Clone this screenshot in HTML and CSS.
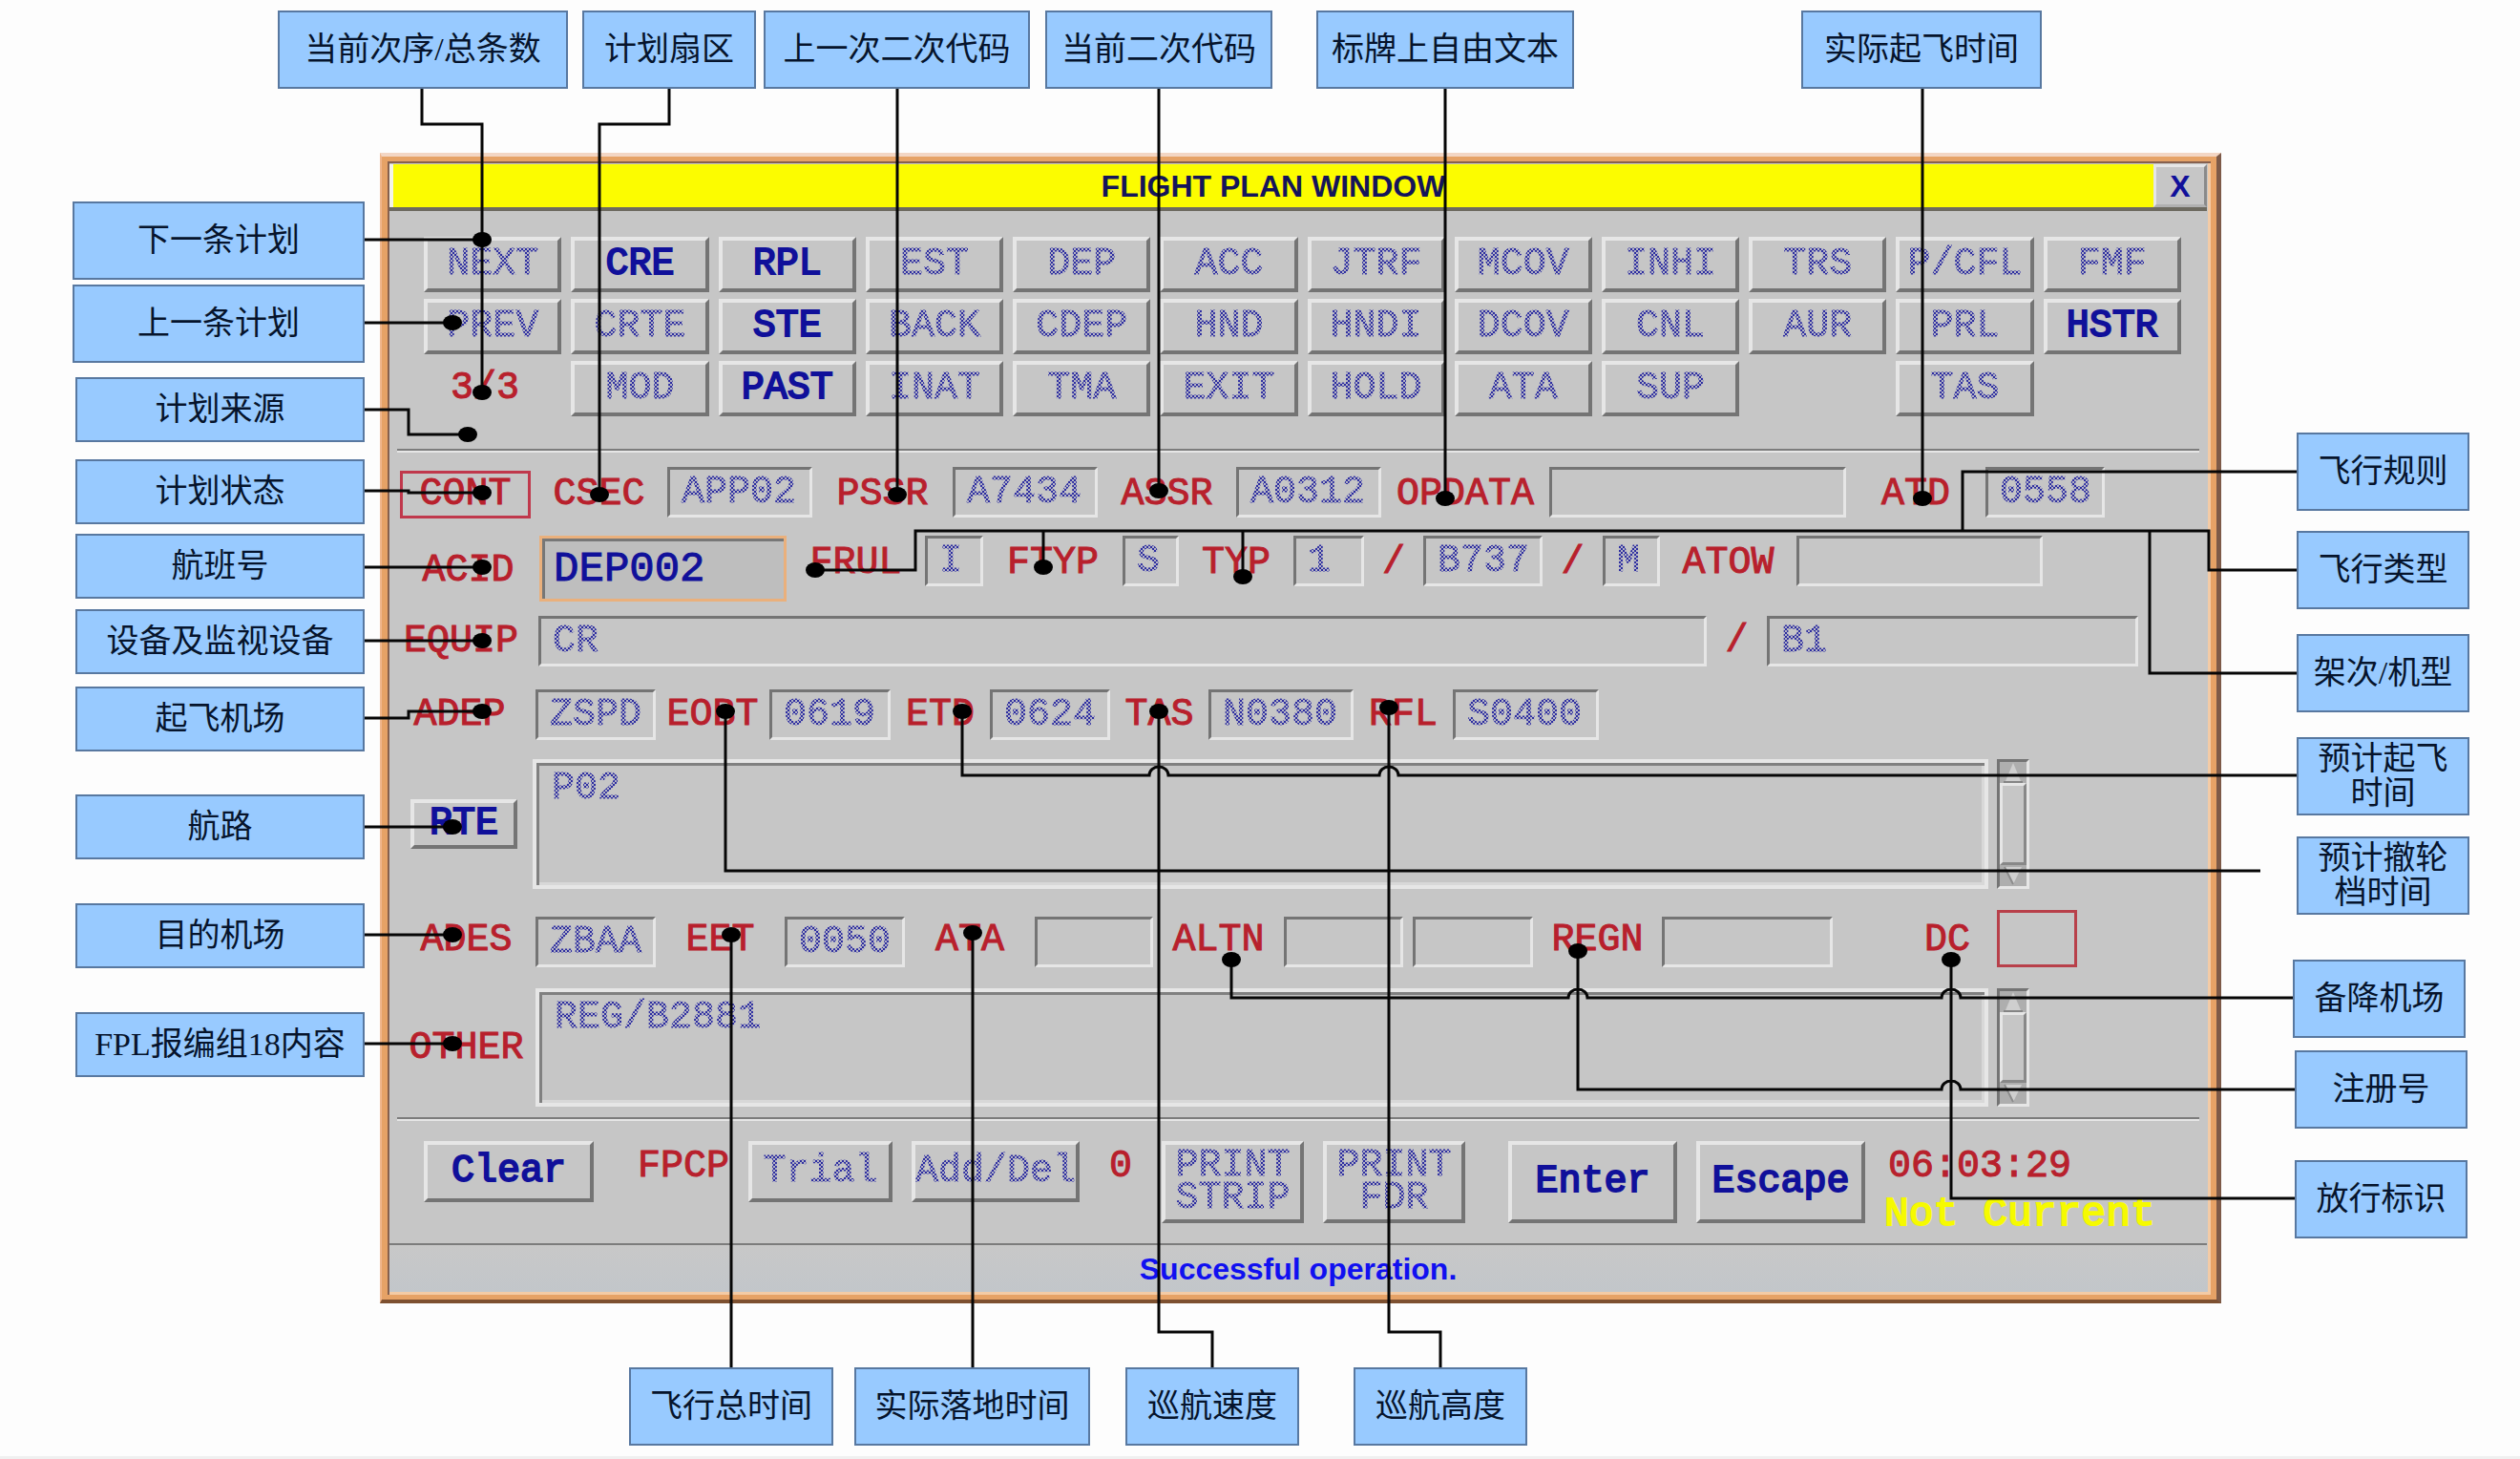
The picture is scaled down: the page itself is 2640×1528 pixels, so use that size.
FILE: index.html
```html
<!DOCTYPE html>
<html lang="zh-CN">
<head>
<meta charset="utf-8">
<meta name="viewport" content="width=device-width, initial-scale=1">
<title>Flight Plan Window</title>
<link rel="stylesheet" href="styles.css">
</head>
<body>
<main class="stage">
  <section class="window" aria-label="Flight plan window">
    <header class="titlebar">
      <h1 class="title">FLIGHT PLAN WINDOW</h1>
      <button class="close" type="button">X</button>
    </header>
    <form class="body">
      <div class="commands">
        <button type="button" class="btn dim">NEXT</button>
        <button type="button" class="btn">CRE</button>
        <button type="button" class="btn">RPL</button>
        <button type="button" class="btn dim">EST</button>
        <button type="button" class="btn dim">DEP</button>
        <button type="button" class="btn dim">ACC</button>
        <button type="button" class="btn dim">JTRF</button>
        <button type="button" class="btn dim">MCOV</button>
        <button type="button" class="btn dim">INHI</button>
        <button type="button" class="btn dim">TRS</button>
        <button type="button" class="btn dim">P/CFL</button>
        <button type="button" class="btn dim">FMF</button>
        <button type="button" class="btn dim">PREV</button>
        <button type="button" class="btn dim">CRTE</button>
        <button type="button" class="btn">STE</button>
        <button type="button" class="btn dim">BACK</button>
        <button type="button" class="btn dim">CDEP</button>
        <button type="button" class="btn dim">HND</button>
        <button type="button" class="btn dim">HNDI</button>
        <button type="button" class="btn dim">DCOV</button>
        <button type="button" class="btn dim">CNL</button>
        <button type="button" class="btn dim">AUR</button>
        <button type="button" class="btn dim">PRL</button>
        <button type="button" class="btn">HSTR</button>
        <span class="tag count">3/3</span>
        <button type="button" class="btn dim">MOD</button>
        <button type="button" class="btn">PAST</button>
        <button type="button" class="btn dim">INAT</button>
        <button type="button" class="btn dim">TMA</button>
        <button type="button" class="btn dim">EXIT</button>
        <button type="button" class="btn dim">HOLD</button>
        <button type="button" class="btn dim">ATA</button>
        <button type="button" class="btn dim">SUP</button>
        <span></span>
        <button type="button" class="btn dim">TAS</button>
      </div>
      <hr class="rule rule-commands">
      <div class="row row-state">
        <span class="tag state">CONT</span>
        <label class="tag" for="csec">CSEC</label><input class="field dim" id="csec" value="APP02">
        <label class="tag" for="pssr">PSSR</label><input class="field dim" id="pssr" value="A7434">
        <label class="tag" for="assr">ASSR</label><input class="field dim" id="assr" value="A0312">
        <label class="tag" for="opdata">OPDATA</label><input class="field dim" id="opdata">
        <label class="tag" for="atd">ATD</label><input class="field dim" id="atd" value="0558">
      </div>
      <div class="row row-acid">
        <label class="tag middle" for="acid">ACID</label><input class="field active" id="acid" value="DEP002">
        <label class="tag" for="frul">FRUL</label><input class="field dim" id="frul" value="I">
        <label class="tag" for="ftyp">FTYP</label><input class="field dim" id="ftyp" value="S">
        <label class="tag" for="count">TYP</label><input class="field dim" id="count" value="1">
        <label class="tag" for="actype">/</label><input class="field dim" id="actype" value="B737">
        <label class="tag" for="wake">/</label><input class="field dim" id="wake" value="M">
        <label class="tag" for="atow">ATOW</label><input class="field dim" id="atow">
      </div>
      <div class="row row-equip">
        <label class="tag early" for="equip">EQUIP</label><input class="field dim" id="equip" value="CR">
        <label class="tag" for="surv">/</label><input class="field dim" id="surv" value="B1">
      </div>
      <div class="row row-adep">
        <label class="tag early" for="adep">ADEP</label><input class="field dim" id="adep" value="ZSPD">
        <label class="tag" for="eobt">EOBT</label><input class="field dim" id="eobt" value="0619">
        <label class="tag" for="etd">ETD</label><input class="field dim" id="etd" value="0624">
        <label class="tag" for="tas">TAS</label><input class="field dim" id="tas" value="N0380">
        <label class="tag" for="rfl">RFL</label><input class="field dim" id="rfl" value="S0400">
      </div>
      <div class="row row-route">
        <button type="button" class="btn route-btn">RTE</button>
        <textarea class="area dim" aria-label="Route">P02</textarea>
        <div class="scroll" aria-hidden="true">
          <svg class="arrow" viewBox="0 0 28 22"><path d="M14 1 L22 20 H6 Z" fill="#cfcfcf"/><path d="M4 21 H24" stroke="#848484" stroke-width="2"/></svg>
          <span class="thumb"></span>
          <svg class="arrow" viewBox="0 0 28 22"><path d="M14 20 L23 2 H5 Z" fill="#cfcfcf"/><path d="M14 20 L5 2" stroke="#8c8c8c" stroke-width="2"/></svg>
        </div>
      </div>
      <div class="row row-ades">
        <label class="tag" for="ades">ADES</label><input class="field dim" id="ades" value="ZBAA">
        <label class="tag" for="eet">EET</label><input class="field dim" id="eet" value="0050">
        <label class="tag" for="ata">ATA</label><input class="field dim" id="ata">
        <label class="tag" for="altn">ALTN</label><input class="field dim" id="altn">
        <input class="field dim second" aria-label="ALTN 2">
        <label class="tag" for="regn">REGN</label><input class="field dim" id="regn">
        <label class="tag dc-label" for="dc">DC</label><input class="dc" id="dc">
      </div>
      <div class="row row-other">
        <label class="tag middle" for="other">OTHER</label>
        <textarea class="area dim" id="other">REG/B2881</textarea>
        <div class="scroll" aria-hidden="true">
          <svg class="arrow" viewBox="0 0 28 22"><path d="M14 1 L22 20 H6 Z" fill="#cfcfcf"/><path d="M4 21 H24" stroke="#848484" stroke-width="2"/></svg>
          <span class="thumb"></span>
          <svg class="arrow" viewBox="0 0 28 22"><path d="M14 20 L23 2 H5 Z" fill="#cfcfcf"/><path d="M14 20 L5 2" stroke="#8c8c8c" stroke-width="2"/></svg>
        </div>
      </div>
      <hr class="rule rule-form">
      <div class="row row-actions">
        <button type="button" class="btn first">Clear</button>
        <span class="tag late">FPCP</span>
        <button type="button" class="btn dim">Trial</button>
        <button type="button" class="btn dim near">Add/Del</button>
        <span class="tag">0</span>
        <button type="button" class="btn dim tall">PRINT STRIP</button>
        <button type="button" class="btn dim tall near">PRINT FDR</button>
        <button type="button" class="btn tall far">Enter</button>
        <button type="button" class="btn tall near">Escape</button>
        <div class="clock"><time class="tag">06:03:29</time><strong class="warning">Not Current</strong></div>
      </div>
    </form>
    <footer class="status">Successful operation.</footer>
  </section>

  <svg class="leaders" viewBox="0 0 2640 1528" preserveAspectRatio="none" aria-hidden="true">
    <g class="lines">
      <path d="M442 92V130H505V411M382 251H505M382 338H474M382 429H428V455H490M382 514H428V516H505M382 594H505M382 671H505M382 752H428V745H505M382 866H474M382 979H474M382 1093H474"/>
      <path d="M701 92V130H628V518M940 92V518M1214 92V514M1514 92V522M2014 92V522"/>
      <path d="M2406 494H2056V556M854 597H959V556H2314V597H2406M1093 556V594M1302 556V604M2252 556V705H2406"/>
      <path d="M1008 745V812H1204A10 9 0 0 1 1224 812H1445A10 9 0 0 1 1465 812H2406M760 745V912H2368"/>
      <path d="M1214 745V1395H1270V1432M1455 741V1395H1509V1432M766 979V1432M1019 977V1432"/>
      <path d="M1290 1005V1045H1643A10 9 0 0 1 1663 1045H2034A10 9 0 0 1 2054 1045H2402M1653 996V1141H2034A10 9 0 0 1 2054 1141H2404M2044 1005V1255H2404"/>
    </g>
    <g class="dots">
      <ellipse cx="505" cy="251" rx="10" ry="8"/><ellipse cx="505" cy="411" rx="10" ry="8"/><ellipse cx="474" cy="338" rx="10" ry="8"/><ellipse cx="490" cy="455" rx="10" ry="8"/><ellipse cx="505" cy="516" rx="10" ry="8"/><ellipse cx="505" cy="594" rx="10" ry="8"/><ellipse cx="505" cy="671" rx="10" ry="8"/><ellipse cx="505" cy="745" rx="10" ry="8"/><ellipse cx="474" cy="866" rx="10" ry="8"/><ellipse cx="474" cy="979" rx="10" ry="8"/><ellipse cx="474" cy="1093" rx="10" ry="8"/>
      <ellipse cx="628" cy="518" rx="10" ry="8"/><ellipse cx="940" cy="518" rx="10" ry="8"/><ellipse cx="1214" cy="514" rx="10" ry="8"/><ellipse cx="1514" cy="522" rx="10" ry="8"/><ellipse cx="2014" cy="522" rx="10" ry="8"/>
      <ellipse cx="854" cy="597" rx="10" ry="8"/><ellipse cx="1093" cy="594" rx="10" ry="8"/><ellipse cx="1302" cy="604" rx="10" ry="8"/>
      <ellipse cx="1008" cy="745" rx="10" ry="8"/><ellipse cx="760" cy="745" rx="10" ry="8"/><ellipse cx="1214" cy="745" rx="10" ry="8"/><ellipse cx="1455" cy="741" rx="10" ry="8"/>
      <ellipse cx="766" cy="979" rx="10" ry="8"/><ellipse cx="1019" cy="977" rx="10" ry="8"/><ellipse cx="1290" cy="1005" rx="10" ry="8"/><ellipse cx="1653" cy="996" rx="10" ry="8"/><ellipse cx="2044" cy="1005" rx="10" ry="8"/>
    </g>
  </svg>

  <div class="note" style="--x:291;--y:11;--w:304">当前次序/总条数</div>
  <div class="note" style="--x:610;--y:11;--w:182">计划扇区</div>
  <div class="note" style="--x:800;--y:11;--w:279">上一次二次代码</div>
  <div class="note" style="--x:1095;--y:11;--w:238">当前二次代码</div>
  <div class="note" style="--x:1379;--y:11;--w:270">标牌上自由文本</div>
  <div class="note" style="--x:1887;--y:11;--w:252">实际起飞时间</div>

  <div class="note" style="--x:76;--y:211;--w:306">下一条计划</div>
  <div class="note" style="--x:76;--y:298;--w:306">上一条计划</div>
  <div class="note slim" style="--x:79;--y:395;--w:303">计划来源</div>
  <div class="note slim" style="--x:79;--y:481;--w:303">计划状态</div>
  <div class="note slim" style="--x:79;--y:559;--w:303">航班号</div>
  <div class="note slim" style="--x:79;--y:638;--w:303">设备及监视设备</div>
  <div class="note slim" style="--x:79;--y:719;--w:303">起飞机场</div>
  <div class="note slim" style="--x:79;--y:832;--w:303">航路</div>
  <div class="note slim" style="--x:79;--y:946;--w:303">目的机场</div>
  <div class="note slim" style="--x:79;--y:1060;--w:303">FPL报编组18内容</div>

  <div class="note" style="--x:2406;--y:453;--w:181">飞行规则</div>
  <div class="note" style="--x:2406;--y:556;--w:181">飞行类型</div>
  <div class="note" style="--x:2406;--y:664;--w:181">架次/机型</div>
  <div class="note" style="--x:2406;--y:772;--w:181">预计起飞<br>时间</div>
  <div class="note" style="--x:2406;--y:876;--w:181">预计撤轮<br>档时间</div>
  <div class="note" style="--x:2402;--y:1005;--w:181">备降机场</div>
  <div class="note" style="--x:2404;--y:1100;--w:181">注册号</div>
  <div class="note" style="--x:2404;--y:1215;--w:181">放行标识</div>

  <div class="note" style="--x:659;--y:1432;--w:214">飞行总时间</div>
  <div class="note" style="--x:895;--y:1432;--w:247">实际落地时间</div>
  <div class="note" style="--x:1179;--y:1432;--w:182">巡航速度</div>
  <div class="note" style="--x:1418;--y:1432;--w:182">巡航高度</div>
</main>
</body>
</html>
```
FILE: styles.css
```css
:root {
  --gray: #c6c6c6;
  --light: #e6e6e6;
  --dark: #747474;
  --navy: #10109a;
  --red: #b8202c;
  --orange: #e6a266;
  --mono: "Liberation Mono", "Courier New", monospace;
  --sans: "Liberation Sans", Arial, sans-serif;
}

* { box-sizing: border-box; }

body {
  margin: 0;
  background: #fdfdfd;
}

.stage {
  position: relative;
  padding: 160px 11.86% 160px 15.08%;
  border-bottom: 3px solid #f0f0f0;
}

/* Window frame */
.window {
  display: flex;
  flex-direction: column;
  padding: 8px 10px 8px 8px;
  border-style: solid;
  border-width: 4px 5px 4px 2px;
  border-color: #f3d6c4 #7d5a48 #7d5030 #f0b68c;
  background: var(--gray);
  box-shadow:
    inset 6px 5px var(--orange),
    inset -6px -5px var(--orange),
    inset 8px 7px #86604e,
    inset -9px -8px #f3cba6;
  font-family: var(--mono);
}

.titlebar {
  display: flex;
  height: 49px;
  border-bottom: 4px solid #6d6a60;
}

.title {
  flex: 1;
  margin: 0;
  border-left: 4px solid #f4f4e8;
  background: #fcfc00;
  color: #14145a;
  font: bold 32px/46px var(--sans);
  text-align: center;
}

.close {
  width: 56px;
  padding: 0;
  border: 3px solid;
  border-color: var(--light) #8a8a8a #b0b0b0 var(--light);
  background: var(--gray);
  color: var(--navy);
  font: bold 32px/36px var(--sans);
}

.body {
  display: flex;
  flex-direction: column;
  padding: 27px 8px 21px;
}

/* Command buttons */
.commands {
  display: grid;
  grid-template-columns: repeat(12, minmax(0, 1fr));
  grid-auto-rows: 58px;
  gap: 7px 10px;
  padding: 0 19px 0 28px;
}

.btn {
  min-width: 0;
  padding: 0;
  border: 4px solid;
  border-color: var(--light) var(--dark) var(--dark) var(--light);
  background: var(--gray);
  color: var(--navy);
  font: 40px/44px var(--mono);
  white-space: nowrap;
  -webkit-text-stroke: 2px var(--navy);
}

/* Unavailable text is stippled */
.btn.dim,
.field.dim,
.area.dim {
  background-color: var(--gray);
  background-image:
    repeating-conic-gradient(#2c2ca0 0 25%, #b4b4c4 0 50%),
    linear-gradient(var(--gray), var(--gray));
  background-size: 4px 4px, auto;
  background-clip: text, border-box;
  color: transparent;
  -webkit-text-stroke: 1px transparent;
}

.tag {
  color: var(--red);
  font-size: 40px;
  line-height: 53px;
  text-align: center;
  white-space: nowrap;
  -webkit-text-stroke: 1px var(--red);
}

.count {
  padding-left: 28px;
  line-height: 58px;
  text-align: left;
}

.early { padding-right: 14px; }
.late { padding-left: 26px; }

.rule {
  width: 100%;
  height: 4px;
  margin: 0;
  border: 0;
  border-top: 2px solid #7c7c7c;
  border-bottom: 2px solid var(--light);
}

.rule-commands { margin-top: 34px; }
.rule-form { margin-top: 11px; }

/* Form rows */
.row {
  display: grid;
  align-items: start;
}

.row-state {
  margin-top: 15px;
  grid-template-columns: 140fr 143fr 152fr 147fr 152fr 145fr 152fr 176fr 311fr 146fr 125fr 99fr;
}

.row-acid {
  margin-top: 19px;
  grid-template-columns: 149fr 259fr 145fr 61fr 146fr 59fr 120fr 74fr 62fr 125fr 63fr 60fr 143fr 258fr 164fr;
}

.row-state .tag,
.row-acid .tag {
  margin-bottom: -4px;
  line-height: 57px;
}

.row-equip {
  margin-top: 15px;
  grid-template-columns: 148fr 1224fr 63fr 389fr 64fr;
}

.row-adep {
  margin-top: 24px;
  grid-template-columns: 145fr 126fr 119fr 127fr 104fr 126fr 103fr 152fr 104fr 153fr 629fr;
}

.row-route {
  margin-top: 20px;
  grid-template-columns: 142fr 1525fr 43fr 178fr;
}

.row-ades {
  margin-top: 22px;
  align-items: end;
  grid-template-columns: 145fr 126fr 135fr 126fr 136fr 124fr 137fr 125fr 136fr 135fr 179fr 172fr 84fr 128fr;
}

.row-ades .tag { line-height: 57px; }

.row-other {
  margin-top: 22px;
  grid-template-columns: 145fr 1522fr 43fr 178fr;
}

.row-actions {
  margin-top: 21px;
  grid-template-columns: 206fr 162fr 151fr 196fr 86fr 149fr 169fr 222fr 197fr 350fr;
}

.middle { align-self: center; }

.row-state .state {
  margin: 4px 0 -1px 3px;
  border: 3px solid #c0384c;
  line-height: 44px;
}

.field {
  width: 100%;
  min-width: 0;
  height: 53px;
  padding: 0 12px;
  border: 3px solid;
  border-color: var(--dark) var(--light) var(--light) var(--dark);
  border-radius: 0;
  font: 40px/46px var(--mono);
}

.field.active {
  height: 69px;
  border: 3px solid #eab07c;
  background: #bebebe;
  box-shadow: inset 3px 3px #777;
  color: var(--navy);
  font-size: 44px;
  -webkit-text-stroke: 1px var(--navy);
}

.area {
  width: 100%;
  height: 136px;
  padding: 4px 16px;
  border: 4px solid var(--light);
  border-radius: 0;
  box-shadow: inset 3px 3px #808080, inset -3px -3px #d8d8d8;
  font: 40px/46px var(--mono);
  overflow: hidden;
  resize: none;
}

.row-other .area,
.row-other .scroll { height: 124px; }

.route-btn {
  height: 52px;
  margin: 0 16px 0 14px;
  align-self: center;
}

.second { width: auto; margin-left: 10px; }

.row-ades .dc-label { padding-right: 28px; text-align: right; }

.dc {
  width: 100%;
  min-width: 0;
  height: 60px;
  border: 3px solid #b8404a;
  background: var(--gray);
  color: var(--red);
  font: 40px/46px var(--mono);
}

.scroll {
  display: flex;
  flex-direction: column;
  height: 136px;
  margin-left: 9px;
  border: 3px solid;
  border-color: var(--dark) var(--light) var(--light) var(--dark);
  background: #aeaeae;
}

.arrow {
  width: 100%;
  height: 22px;
  fill: none;
}

.thumb {
  flex: 1;
  border: 3px solid;
  border-color: var(--light) #888 #888 var(--light);
  background: var(--gray);
}

/* Bottom actions */
.row-actions .btn { height: 64px; line-height: 36px; }
.row-actions .tall { height: 86px; line-height: 34px; white-space: normal; }
.row-actions .first { margin-left: 28px; }
.row-actions .near { margin-left: 20px; }
.row-actions .far { margin-left: 45px; }

.clock {
  display: flex;
  flex-direction: column;
  padding-left: 24px;
}

.clock .tag { text-align: left; }

.warning {
  margin: 2px 0 -14px -4px;
  color: #f6fa00;
  font: 43px/44px var(--mono);
  white-space: nowrap;
  -webkit-text-stroke: 2px #f6fa00;
}

.status {
  height: 51px;
  border-top: 2px solid #7c7c7c;
  background: linear-gradient(#c8c8c8, #c2c6ca);
  color: #1010f0;
  font: bold 32px/50px var(--sans);
  text-align: center;
}

/* Leader lines over the window */
.leaders {
  position: absolute;
  top: 0;
  left: 0;
  width: 100%;
  height: 1528px;
  pointer-events: none;
}

.lines {
  fill: none;
  stroke: #060606;
  stroke-width: 3;
}

.dots { fill: #000; }

/* Diagram notes */
.note {
  position: absolute;
  left: calc(var(--x) / 2640 * 100%);
  top: calc(var(--y) * 1px);
  width: calc(var(--w) / 2640 * 100%);
  height: 82px;
  display: flex;
  align-items: center;
  justify-content: center;
  border: 2px solid #5878a0;
  background: #98caff;
  color: #06142c;
  font: 34px/36px "Liberation Serif", "Noto Sans CJK SC", serif;
  text-align: center;
  white-space: nowrap;
}

.slim { height: 68px; }
```
